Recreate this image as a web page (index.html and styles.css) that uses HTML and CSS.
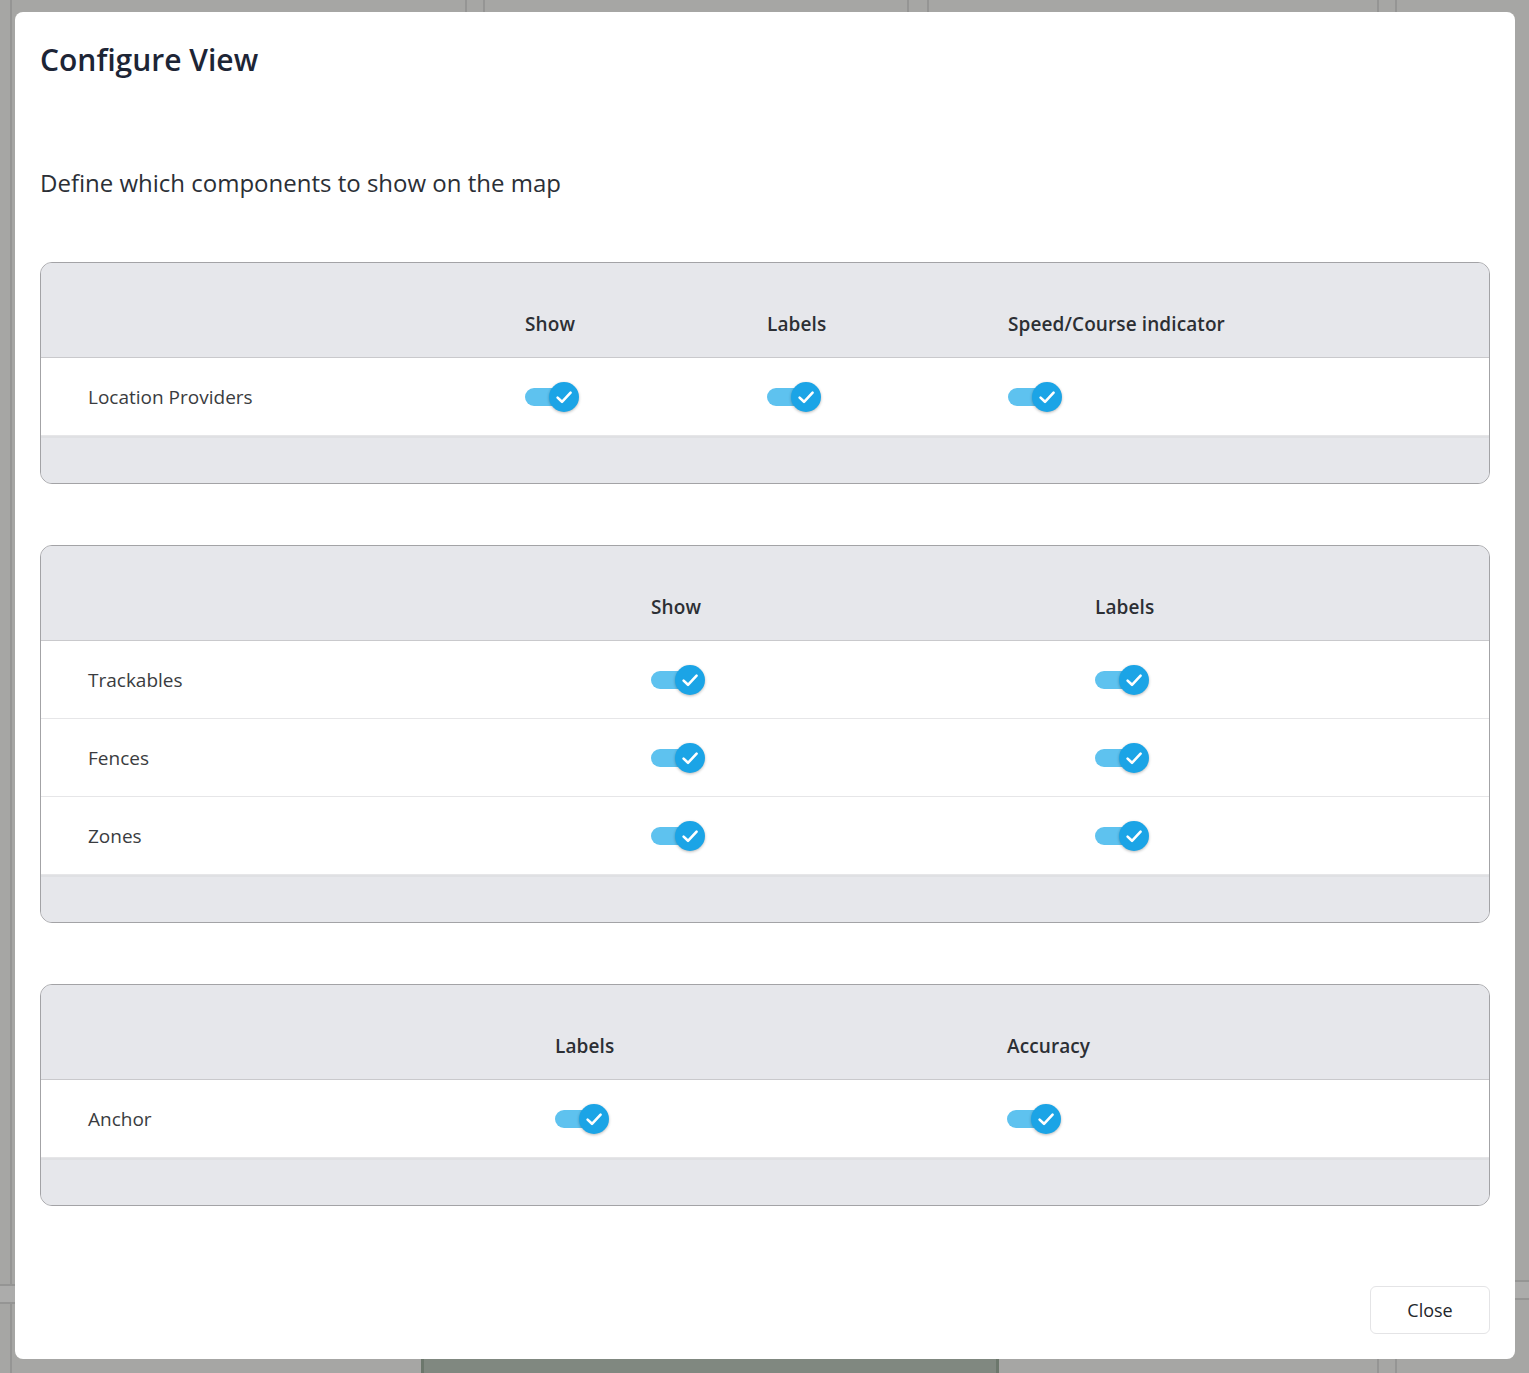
FILE: index.html
```html
<!DOCTYPE html>
<html lang="en">
<head>
<meta charset="utf-8">
<title>Configure View</title>
<link rel="stylesheet" href="styles.css">
</head>
<body>
<div class="backdrop">
  <div class="bg-line bg-v v1"></div>
  <div class="bg-line bg-v v2"></div>
  <div class="bg-line bg-v v3"></div>
  <div class="bg-line bg-v v4"></div>
  <div class="bg-line bg-v v5"></div>
  <div class="bg-line bg-v v6"></div>
  <div class="bg-line bg-v v7"></div>
  <div class="bg-band bl"></div>
  <div class="bg-band br"></div>
  <div class="bg-block"></div>
</div>

<div class="modal">
  <h1 class="title">Configure View</h1>
  <p class="subtitle">Define which components to show on the map</p>

  <section class="cfg-table">
    <div class="cfg-row cfg-head cols-a">
      <div class="cell"></div>
      <div class="cell">Show</div>
      <div class="cell">Labels</div>
      <div class="cell">Speed/Course indicator</div>
    </div>
    <div class="cfg-row cols-a">
      <div class="cell label">Location Providers</div>
      <div class="cell"><span class="toggle"><span class="track"></span><span class="knob"><svg viewBox="0 0 30 30" width="30" height="30"><path d="M8.6 15.6 L13 19.8 L21.6 10.6" fill="none" stroke="#fff" stroke-width="2.6" stroke-linecap="round" stroke-linejoin="round"/></svg></span></span></div>
      <div class="cell"><span class="toggle"><span class="track"></span><span class="knob"><svg viewBox="0 0 30 30" width="30" height="30"><path d="M8.6 15.6 L13 19.8 L21.6 10.6" fill="none" stroke="#fff" stroke-width="2.6" stroke-linecap="round" stroke-linejoin="round"/></svg></span></span></div>
      <div class="cell"><span class="toggle"><span class="track"></span><span class="knob"><svg viewBox="0 0 30 30" width="30" height="30"><path d="M8.6 15.6 L13 19.8 L21.6 10.6" fill="none" stroke="#fff" stroke-width="2.6" stroke-linecap="round" stroke-linejoin="round"/></svg></span></span></div>
    </div>
    <div class="cfg-foot"></div>
  </section>

  <section class="cfg-table">
    <div class="cfg-row cfg-head cols-b">
      <div class="cell"></div>
      <div class="cell">Show</div>
      <div class="cell">Labels</div>
    </div>
    <div class="cfg-row cols-b">
      <div class="cell label">Trackables</div>
      <div class="cell"><span class="toggle"><span class="track"></span><span class="knob"><svg viewBox="0 0 30 30" width="30" height="30"><path d="M8.6 15.6 L13 19.8 L21.6 10.6" fill="none" stroke="#fff" stroke-width="2.6" stroke-linecap="round" stroke-linejoin="round"/></svg></span></span></div>
      <div class="cell"><span class="toggle"><span class="track"></span><span class="knob"><svg viewBox="0 0 30 30" width="30" height="30"><path d="M8.6 15.6 L13 19.8 L21.6 10.6" fill="none" stroke="#fff" stroke-width="2.6" stroke-linecap="round" stroke-linejoin="round"/></svg></span></span></div>
    </div>
    <div class="cfg-row cols-b">
      <div class="cell label">Fences</div>
      <div class="cell"><span class="toggle"><span class="track"></span><span class="knob"><svg viewBox="0 0 30 30" width="30" height="30"><path d="M8.6 15.6 L13 19.8 L21.6 10.6" fill="none" stroke="#fff" stroke-width="2.6" stroke-linecap="round" stroke-linejoin="round"/></svg></span></span></div>
      <div class="cell"><span class="toggle"><span class="track"></span><span class="knob"><svg viewBox="0 0 30 30" width="30" height="30"><path d="M8.6 15.6 L13 19.8 L21.6 10.6" fill="none" stroke="#fff" stroke-width="2.6" stroke-linecap="round" stroke-linejoin="round"/></svg></span></span></div>
    </div>
    <div class="cfg-row cols-b">
      <div class="cell label">Zones</div>
      <div class="cell"><span class="toggle"><span class="track"></span><span class="knob"><svg viewBox="0 0 30 30" width="30" height="30"><path d="M8.6 15.6 L13 19.8 L21.6 10.6" fill="none" stroke="#fff" stroke-width="2.6" stroke-linecap="round" stroke-linejoin="round"/></svg></span></span></div>
      <div class="cell"><span class="toggle"><span class="track"></span><span class="knob"><svg viewBox="0 0 30 30" width="30" height="30"><path d="M8.6 15.6 L13 19.8 L21.6 10.6" fill="none" stroke="#fff" stroke-width="2.6" stroke-linecap="round" stroke-linejoin="round"/></svg></span></span></div>
    </div>
    <div class="cfg-foot"></div>
  </section>

  <section class="cfg-table">
    <div class="cfg-row cfg-head cols-c">
      <div class="cell"></div>
      <div class="cell">Labels</div>
      <div class="cell">Accuracy</div>
    </div>
    <div class="cfg-row cols-c">
      <div class="cell label">Anchor</div>
      <div class="cell"><span class="toggle"><span class="track"></span><span class="knob"><svg viewBox="0 0 30 30" width="30" height="30"><path d="M8.6 15.6 L13 19.8 L21.6 10.6" fill="none" stroke="#fff" stroke-width="2.6" stroke-linecap="round" stroke-linejoin="round"/></svg></span></span></div>
      <div class="cell"><span class="toggle"><span class="track"></span><span class="knob"><svg viewBox="0 0 30 30" width="30" height="30"><path d="M8.6 15.6 L13 19.8 L21.6 10.6" fill="none" stroke="#fff" stroke-width="2.6" stroke-linecap="round" stroke-linejoin="round"/></svg></span></span></div>
    </div>
    <div class="cfg-foot"></div>
  </section>

  <div class="actions">
    <button class="btn" type="button">Close</button>
  </div>
</div>
</body>
</html>
```
FILE: styles.css
```css
* { box-sizing: border-box; }

html, body {
  margin: 0;
  height: 1373px;
  overflow: hidden;
}

body {
  background: #a6a6a4;
  font-family: "Open Sans", "Noto Sans", sans-serif;
  position: relative;
}

/* underlying page seen through the dimmed overlay */
.backdrop {
  position: absolute;
  inset: 0;
}
.bg-line {
  position: absolute;
  background: #959594;
}
.bg-v { top: 0; bottom: 0; width: 2px; }
.v1 { left: 10px; }
.v2 { left: 465px; }
.v3 { left: 483px; }
.v4 { left: 907px; }
.v5 { left: 927px; }
.v6 { left: 1377px; }
.v7 { left: 1395px; }
.bg-band {
  position: absolute;
  height: 20px;
  background: #acacab;
  border-top: 2px solid #959594;
  border-bottom: 2px solid #959594;
}
.bl { left: 0; width: 15px; top: 1284px; }
.br { right: 0; width: 14px; top: 1280px; }
.bg-block {
  position: absolute;
  left: 421px;
  width: 578px;
  top: 1359px;
  height: 14px;
  background: #808880;
  border-left: 3px solid #6c776c;
  border-right: 3px solid #6c776c;
}

/* modal */
.modal {
  position: absolute;
  left: 15px;
  top: 12px;
  width: 1500px;
  height: 1347px;
  background: #fff;
  border-radius: 8px;
  padding: 28px 25px 25px 25px;
  display: flex;
  flex-direction: column;
}

.title {
  margin: 0;
  font-size: 30px;
  line-height: 40px;
  font-weight: 600;
  color: #1d2536;
}

.subtitle {
  margin: 87px 0 63px 0;
  font-size: 24px;
  line-height: 32px;
  font-weight: 400;
  color: #2b2f36;
}

.cfg-table {
  border: 1px solid #a3a3a6;
  border-radius: 12px;
  overflow: hidden;
  background: #e6e7eb;
  margin-bottom: 61px;
}
.cfg-table:last-of-type { margin-bottom: 0; }

.cfg-row {
  display: grid;
  height: 78px;
  align-items: center;
  background: #fff;
  border-bottom: 1px solid #e6e6e8;
}
.cfg-head {
  height: 95px;
  background: #e6e7eb;
  border-bottom: 1px solid #c9c9cc;
  align-items: end;
  padding-bottom: 20px;
}
.cols-a { grid-template-columns: 484px 242px 241px 1fr; }
.cols-b { grid-template-columns: 610px 444px 1fr; }
.cols-c { grid-template-columns: 514px 452px 1fr; }

.cell {
  font-size: 19px;
  line-height: 26px;
  color: #2c2f34;
  font-weight: 600;
  letter-spacing: 0.1px;
}
.cfg-row:not(.cfg-head) .cell { display: flex; align-items: center; }
.cell.label {
  padding-left: 47px;
  font-weight: 400;
  letter-spacing: 0;
  color: #3a3c40;
}

.cfg-foot {
  height: 47px;
  background: #e6e7eb;
  border-top: 2px solid #dfe0e3;
}

/* toggle */
.toggle {
  position: relative;
  display: inline-block;
  width: 54px;
  height: 30px;
}
.track {
  position: absolute;
  left: 0;
  top: 6px;
  width: 46px;
  height: 18px;
  border-radius: 9px;
  background: #5ec2ef;
}
.knob {
  position: absolute;
  left: 24px;
  top: 0;
  width: 30px;
  height: 30px;
  border-radius: 50%;
  background: #1ba4e6;
  box-shadow: 0 1px 3px rgba(0, 0, 0, 0.28);
  display: block;
}
.knob svg { display: block; }

.actions {
  margin-top: auto;
  display: flex;
  justify-content: flex-end;
}
.btn {
  width: 120px;
  height: 48px;
  background: #fff;
  border: 1px solid #e4e4e6;
  border-radius: 6px;
  font-family: "Open Sans", "Noto Sans", sans-serif;
  font-size: 18px;
  color: #23262b;
  cursor: pointer;
}
```
